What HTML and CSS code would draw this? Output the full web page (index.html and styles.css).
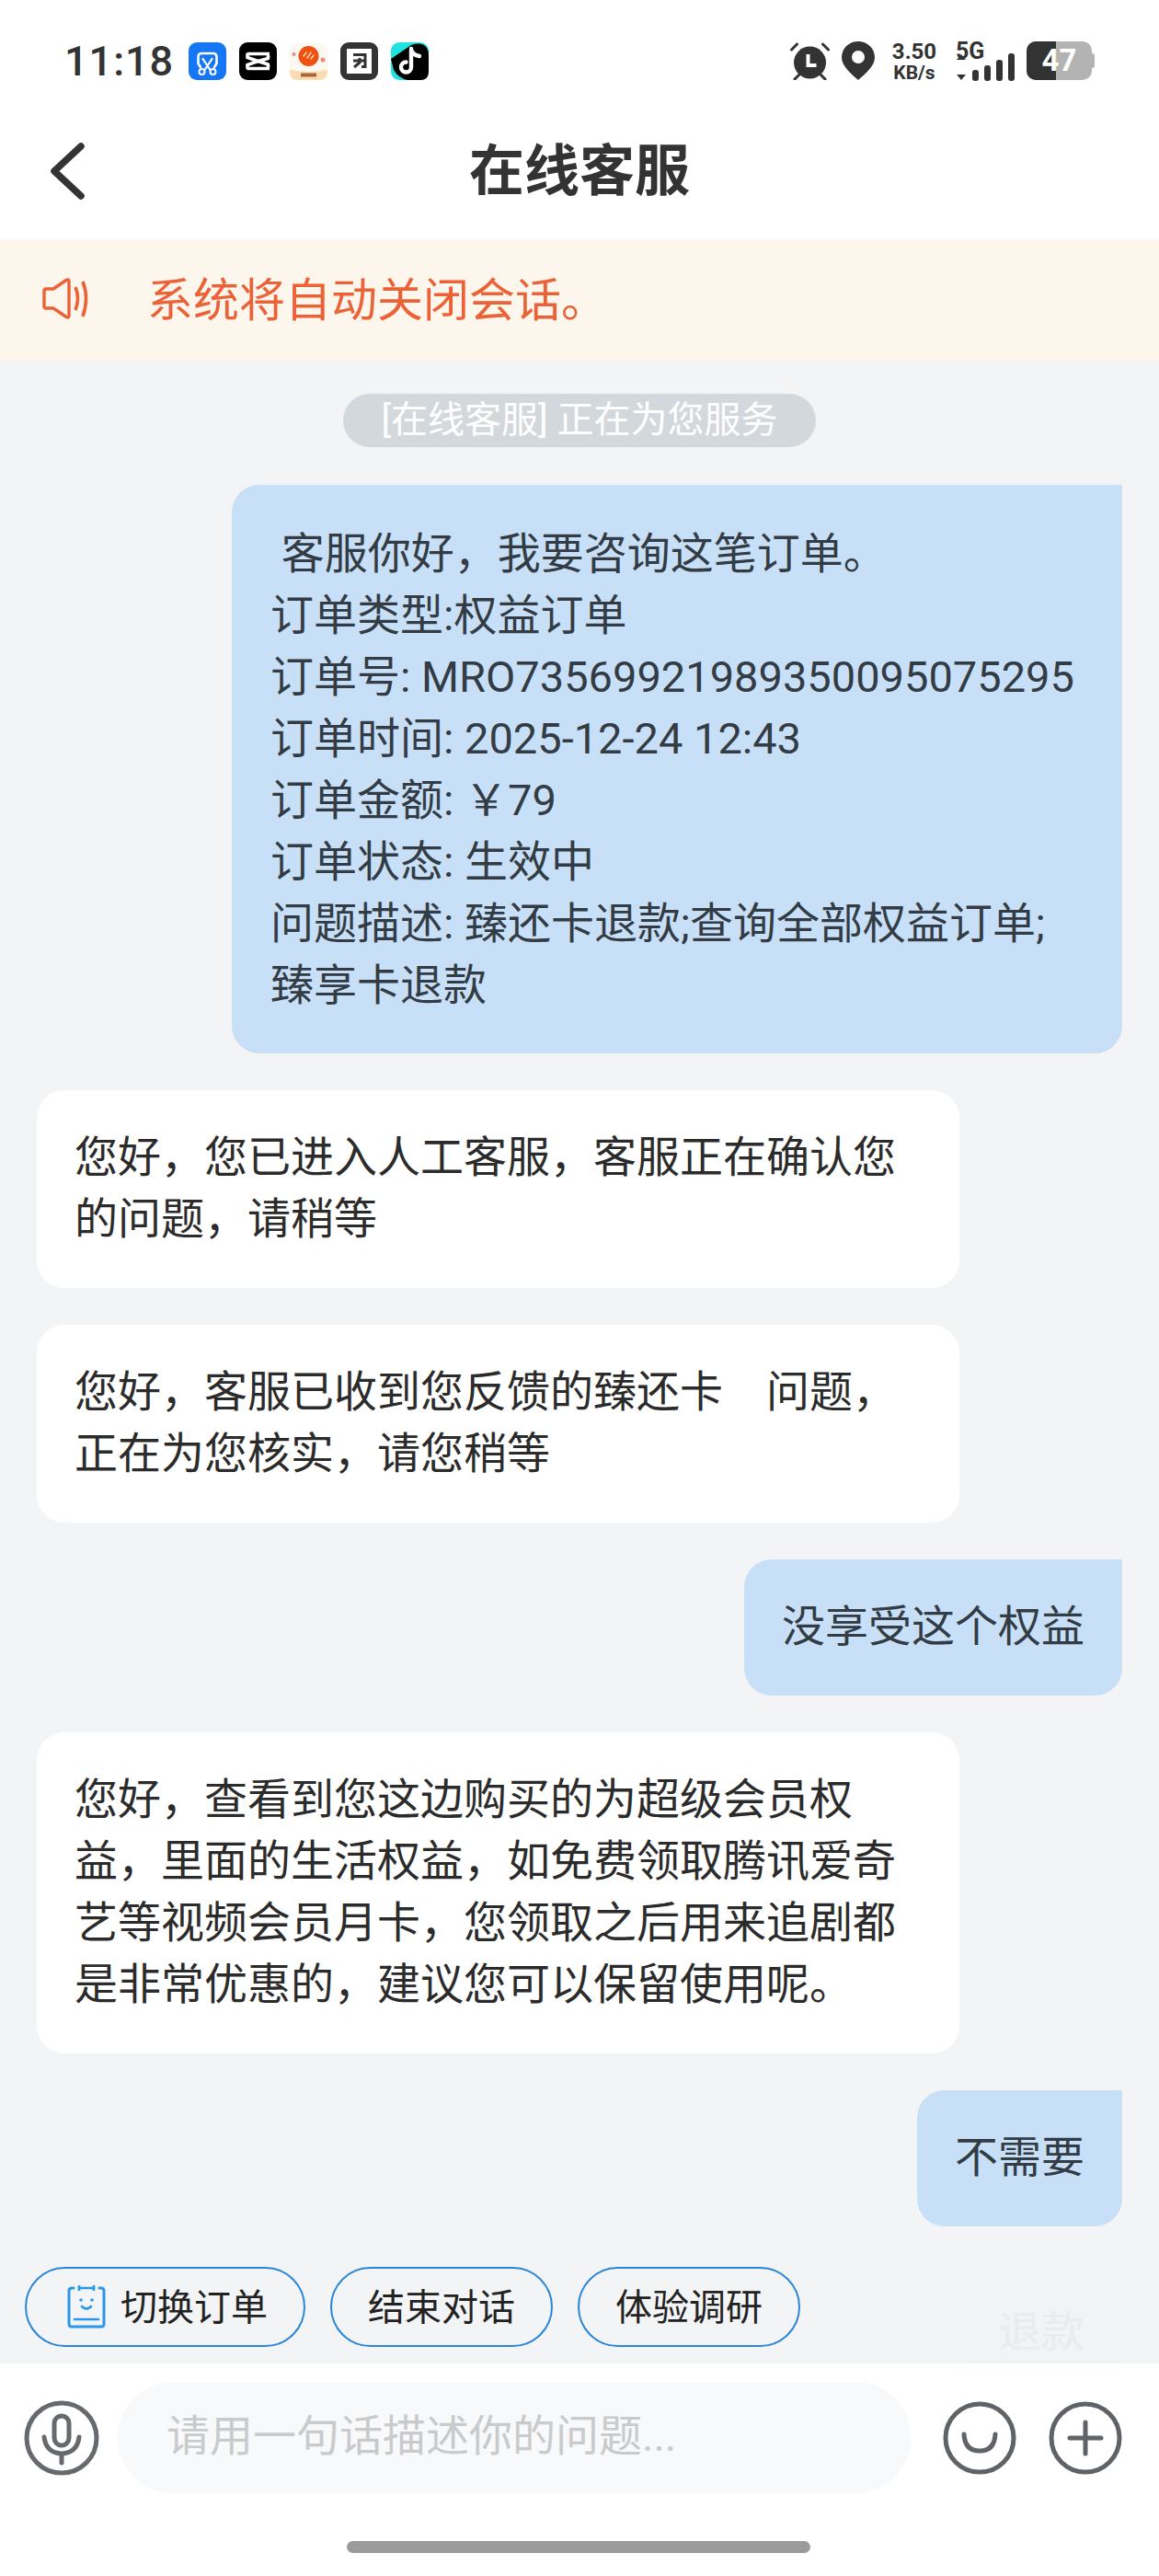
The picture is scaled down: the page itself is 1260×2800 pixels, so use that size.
FILE: index.html
```html
<!DOCTYPE html>
<html lang="zh-CN">
<head>
  <meta charset="UTF-8"/>
  <meta name="viewport" content="width=device-width, initial-scale=1"/>
  <title>在线客服</title>
  <link rel="stylesheet" href="styles.css">
</head>
<body>

  <!-- Status bar -->
  <div class="status-bar">
    <div class="status-left">
      <span class="clock">11:18</span>
      <div class="app-icons">
        <svg class="app-icon" viewBox="0 0 41 41">
          <rect width="41" height="41" rx="9" fill="#1677f6"/>
          <path d="M13 27l-2.500-4v-7q0-4 4-4h12q4 0 4 4v7l-2.500 4" fill="none" stroke="#fff" stroke-width="2.600" stroke-linecap="round" stroke-linejoin="round"/>
          <path d="M15.500 18l8 12M25.500 18l-8 12" stroke="#fff" stroke-width="2.200" stroke-linecap="round"/>
          <circle cx="14.500" cy="32" r="3" fill="none" stroke="#fff" stroke-width="2"/>
          <circle cx="26.500" cy="32" r="3" fill="none" stroke="#fff" stroke-width="2"/>
        </svg>
        <svg class="app-icon" viewBox="0 0 41 41">
          <rect width="41" height="41" rx="9" fill="#000"/>
          <path d="M33 12.500H10.500q-1.500 0-1.500 1.500v2.500L20.500 20.500 9 24.500v2.500q0 1.500 1.500 1.500H33" fill="none" stroke="#fff" stroke-width="3.600"/>
          <path d="M31.500 14v3.500L20.500 20.500l11 3.500v3.500" fill="none" stroke="#fff" stroke-width="3.600" stroke-linejoin="round"/>
        </svg>
        <svg class="app-icon" viewBox="0 0 41 41">
          <rect width="41" height="41" rx="9" fill="#fdf8f2"/>
          <path d="M0 30q20 4 41 0v2q0 9-9 9H9q-9 0-9-9z" fill="#fbdcb1"/>
          <circle cx="20.500" cy="15" r="11" fill="#ee5113"/>
          <path d="M15 15l3-4M19 17l4-6M23 18l3-4" stroke="#ffd9a8" stroke-width="1.500" stroke-linecap="round"/>
          <circle cx="4.500" cy="13" r="2" fill="#ef8a78"/>
          <circle cx="36" cy="19" r="2.500" fill="#ef8a78"/>
          <rect x="12" y="33.500" width="17" height="4" fill="#a8653a"/>
        </svg>
        <svg class="app-icon" viewBox="0 0 41 41">
          <rect width="41" height="41" rx="9" fill="#333"/>
          <rect x="7" y="7" width="27" height="27" fill="#fff"/>
          <path d="M14 14.500h13v13h-4M21 18v5l-6 5M14 21h12" transform="translate(0 -1)" fill="none" stroke="#333" stroke-width="3"/>
        </svg>
        <svg class="app-icon" viewBox="0 0 41 41">
          <rect width="41" height="41" rx="9" fill="#1fe3de"/>
          <path d="M0 18L22 3Q34-1 39 6q2 3 2 8v18q0 9-9 9H18Q8 39 3 30z" fill="#000"/>
          <path d="M22 7v20a5.500 5.500 0 1 1-5.500-5.500M22 8q2 6 9 7" fill="none" stroke="#fff" stroke-width="4.400" stroke-linecap="round"/>
        </svg>
      </div>
    </div>
    <div class="status-right">
      <svg class="ico-alarm" viewBox="0 0 43 42">
        <circle cx="21.500" cy="23" r="17.500" fill="#333"/>
        <path d="M1.500 9l6-6M41.500 9l-6-6M5 41l5-5M38 41l-5-5" stroke="#333" stroke-width="3" stroke-linecap="round"/>
        <path d="M19.500 14v12h9" fill="none" stroke="#fff" stroke-width="4"/>
      </svg>
      <svg class="ico-pin" viewBox="0 0 36 42">
        <path d="M18 0c10 0 18 7.500 18 17.500C36 27 25 36 18 42 11 36 0 27 0 17.500 0 7.500 8 0 18 0z" fill="#333"/>
        <circle cx="18" cy="17" r="7" fill="#fff"/>
      </svg>
      <div class="net-speed">
        <span class="speed-num">3.50</span>
        <span class="speed-unit">KB/s</span>
      </div>
      <div class="signal">
        <span class="signal-label">5G</span>
        <svg class="signal-bars" viewBox="0 0 64 30">
          <path d="M6 1l5 6H1zM6 29l5-6H1z" fill="#333"/>
          <rect x="18" y="18" width="7" height="12" rx="3" fill="#333"/>
          <rect x="31" y="13" width="7" height="17" rx="3" fill="#333"/>
          <rect x="44" y="7" width="7" height="23" rx="3" fill="#333"/>
          <rect x="57" y="0" width="7" height="30" rx="3" fill="#333"/>
        </svg>
      </div>
      <div class="battery">
        <div class="battery-fill"></div>
        <span class="battery-num">47</span>
      </div>
    </div>
  </div>

  <!-- Title -->
  <div class="nav-bar">
    <svg class="nav-back" viewBox="0 0 40 64">
      <path d="M35 5L6 32l29 27" fill="none" stroke="#333" stroke-width="7.500" stroke-linecap="round" stroke-linejoin="round"/>
    </svg>
    <span class="nav-title">在线客服</span>
  </div>

  <!-- Notice -->
  <div class="notice">
    <svg class="notice-ico" viewBox="0 0 52 46">
      <path d="M3 14q0-2 2-2h8L27 2.500q3-1.500 3 1.500v37q0 3-3 1.500L13 33H5q-2 0-2-2z" fill="none" stroke="#ec6237" stroke-width="3.400" stroke-linejoin="round"/>
      <path d="M37 10q5 12 0 25M45 4q7 18 0 38" fill="none" stroke="#ec6237" stroke-width="3.600"/>
    </svg>
    <span>系统将自动关闭会话。</span>
  </div>

  <!-- Chat -->
  <div class="chat">
    <div class="sys-pill">[在线客服] 正在为您服务</div>

    <div class="msg msg-me msg-first"> 客服你好，我要咨询这笔订单。
订单类型:权益订单
订单号: MRO73569921989350095075295
订单时间: 2025-12-24 12:43
订单金额: ￥79
订单状态: 生效中
问题描述: 臻还卡退款;查询全部权益订单;臻享卡退款</div>

    <div class="msg msg-them">您好，您已进入人工客服，客服正在确认您的问题，请稍等</div>
    <div class="msg msg-them">您好，客服已收到您反馈的臻还卡　问题，正在为您核实，请您稍等</div>
    <div class="msg msg-me">没享受这个权益</div>
    <div class="msg msg-them">您好，查看到您这边购买的为超级会员权益，里面的生活权益，如免费领取腾讯爱奇艺等视频会员月卡，您领取之后用来追剧都是非常优惠的，建议您可以保留使用呢。</div>
    <div class="msg msg-me">不需要</div>
    <div class="msg msg-me msg-faded">退款</div>

    <!-- Quick actions float over the messages -->
    <div class="quick-bar">
      <div class="chip">
        <svg class="chip-ico" viewBox="0 0 42 47">
          <path d="M7 3H5Q2 3 2 6v36q0 3 3 3h32q3 0 3-3V6q0-3-3-3h-2" fill="none" stroke="#2a98e8" stroke-width="3" stroke-linecap="round"/>
          <path d="M14 3h14M13 0v6M29 0v6" stroke="#2a98e8" stroke-width="2.600"/>
          <circle cx="15" cy="16" r="1.800" fill="#2a98e8"/>
          <circle cx="27" cy="16" r="1.800" fill="#2a98e8"/>
          <path d="M16 23q5 5 10 0" fill="none" stroke="#2a98e8" stroke-width="2.600" stroke-linecap="round"/>
          <path d="M8 37h26" stroke="#2a98e8" stroke-width="2.600" stroke-linecap="round"/>
        </svg>
        <span class="chip-text">切换订单</span>
      </div>
      <div class="chip"><span class="chip-text">结束对话</span></div>
      <div class="chip"><span class="chip-text">体验调研</span></div>
    </div>
  </div>

  <!-- Input -->
  <div class="footer">
    <div class="input-row">
      <svg class="ico-mic" viewBox="0 0 82 82">
        <circle cx="41" cy="41" r="38" fill="none" stroke="#666a6e" stroke-width="5"/>
        <rect x="33" y="17" width="16" height="32" rx="8" fill="none" stroke="#666a6e" stroke-width="5"/>
        <path d="M22 40q2 17 19 18 17-1 19-18M41 58v10" fill="none" stroke="#666a6e" stroke-width="5" stroke-linecap="round"/>
      </svg>
      <div class="input-box">请用一句话描述你的问题...</div>
      <svg class="ico-round" viewBox="0 0 80 80">
        <circle cx="40" cy="40" r="37" fill="none" stroke="#5f6368" stroke-width="5"/>
        <path d="M23 36q1 18 17 18t17-18" fill="none" stroke="#5f6368" stroke-width="5" stroke-linecap="round"/>
      </svg>
      <svg class="ico-round ico-plus" viewBox="0 0 80 80">
        <circle cx="40" cy="40" r="37" fill="none" stroke="#5f6368" stroke-width="5"/>
        <path d="M40 23v34M23 40h34" fill="none" stroke="#5f6368" stroke-width="5" stroke-linecap="round"/>
      </svg>
    </div>
    <div class="home-bar"></div>
  </div>

</body>
</html>
```

FILE: styles.css
```css
* { box-sizing: border-box; }
body {
  margin: 0;
  width: 1260px;
  height: 2800px;
  overflow: hidden;
  background: #fff;
  font-family: Roboto, "Noto Sans CJK SC", sans-serif;
  color: #2b2b2b;
}

/* Status bar */
.status-bar {
  height: 132px;
  padding: 0 70px;
  display: flex;
  justify-content: space-between;
  align-items: center;
  color: #333;
}
.status-left { display: flex; align-items: center; gap: 18px; }
.clock { font-size: 45px; font-weight: 500; width: 117px; letter-spacing: 1px; }
.app-icons { display: flex; gap: 14px; }
.app-icon { width: 41px; height: 41px; display: block; }
.status-right { display: flex; align-items: center; height: 43px; }
.ico-alarm { width: 43px; height: 42px; margin-right: 13px; }
.ico-pin { width: 36px; height: 42px; margin-right: 19px; }
.net-speed {
  display: flex; flex-direction: column;
  align-items: center; width: 48px;
  margin-right: 21px; font-weight: 700;
}
.speed-num { font-size: 24px; line-height: 26px; }
.speed-unit { font-size: 21px; line-height: 20px; }
.signal { width: 64px; margin-right: 13px; position: relative; height: 43px; }
.signal-label {
  position: absolute; top: -1px; left: 0;
  font-size: 25px; line-height: 24px; font-weight: 700;
}
.signal-bars { position: absolute; left: 0; bottom: 0; width: 64px; height: 30px; }
.battery {
  width: 71px; height: 42px;
  background: #b3b3b3;
  border-radius: 10px;
  position: relative;
  margin-right: 3px;
}
.battery::after {
  content: "";
  position: absolute;
  right: -3px; top: 13px;
  width: 3px; height: 16px;
  background: #b3b3b3;
  border-radius: 0 3px 3px 0;
}
.battery-fill {
  width: 32px; height: 100%;
  background: #333;
  border-radius: 10px 0 0 10px;
}
.battery-num {
  position: absolute; inset: 0;
  text-align: center;
  font-size: 33px; line-height: 42px;
  font-weight: 700; color: #fff;
}

/* Title */
.nav-bar {
  height: 128px;
  padding-bottom: 31px;
  display: flex;
  align-items: center;
  justify-content: center;
  position: relative;
}
.nav-back {
  position: absolute; left: 53px; top: 22px;
  width: 40px; height: 64px;
}
.nav-title { font-size: 60px; font-weight: 700; color: #333; }

/* Notice */
.notice {
  height: 132px;
  padding: 0 0 8px 45px;
  background: #fdf6ed;
  display: flex;
  align-items: center;
  font-size: 50px;
  color: #ec6237;
}
.notice-ico { width: 52px; height: 46px; margin: 6px 63px 0 0; }

/* Chat */
.chat {
  height: 2177px;
  padding: 36px 40px 0;
  background: #f3f4f6;
  display: flex;
  flex-direction: column;
  gap: 40px;
  position: relative;
  overflow: hidden;
}
.sys-pill {
  align-self: center;
  height: 60px;
  margin-bottom: 1px;
  padding: 0 41px;
  border-radius: 30px;
  background: #d3d8dc;
  color: #fff;
  font-size: 40px;
  line-height: 58px;
}
.msg {
  padding: 39px 41px 42px;
  font-size: 47px;
  line-height: 67px;
  flex-shrink: 0;
}
.msg-them {
  align-self: flex-start;
  width: 1003px;
  background: #fff;
  border-radius: 30px;
}
.msg-me {
  align-self: flex-end;
  background: #c8e0f7;
  color: #333c44;
  border-radius: 30px 0 30px 30px;
  white-space: pre-wrap;
}
.msg-first { width: 968px; padding: 41px 50px 41px 42px; }
.msg-faded {
  margin-top: 2px;
  background: #f1f3f7;
  color: #e9ebee;
  border-radius: 20px 0 20px 20px;
}

/* Quick actions */
.quick-bar {
  position: absolute;
  left: 27px; bottom: 18px;
  display: flex;
  gap: 27px;
}
.chip {
  height: 87px;
  padding: 0 39px;
  border: 2px solid #2a86d8;
  border-radius: 44px;
  display: flex;
  align-items: center;
  gap: 16px;
  font-size: 40px;
  color: #222;
  white-space: nowrap;
}
.chip-text { margin-top: -6px; }
.chip-ico { width: 42px; height: 47px; margin-left: 5px; }

/* Input */
.footer { height: 231px; padding-top: 20px; background: #fff; }
.input-row {
  height: 121px;
  padding-left: 26px;
  display: flex;
  align-items: center;
}
.ico-mic { width: 82px; height: 82px; margin-right: 20px; }
.input-box {
  width: 862px; height: 121px;
  padding-left: 53px;
  border-radius: 60px;
  background: #f8f9fa;
  color: #c9cacc;
  font-size: 47px;
  line-height: 118px;
  margin-right: 35px;
}
.ico-round { width: 80px; height: 80px; }
.ico-plus { margin-left: 35px; }
.home-bar {
  width: 504px; height: 13px;
  margin: 52px 0 0 377px;
  border-radius: 7px;
  background: #9b9b9b;
}
```
